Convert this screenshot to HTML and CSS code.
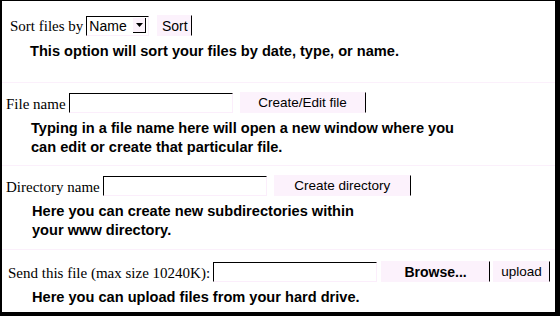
FILE: index.html
```html
<!DOCTYPE html>
<html lang="en">
<head>
    <meta charset="UTF-8">
    <title>File manager</title>
    <link rel="stylesheet" href="styles.css">
</head>
<body>
    <div class="frame">
        <form class="section sort-section">
            <div class="controls">
                <label class="label">Sort files by</label>
                <span class="select-box">
                    <select class="select">
                        <option>Name</option>
                        <option>Date</option>
                        <option>Type</option>
                    </select>
                    <span class="select-arrow"><svg width="7" height="4" viewBox="0 0 7 4"><path d="M0 0h7L3.5 4z" fill="#000"/></svg></span>
                </span>
                <button type="button" class="btn btn-sort">Sort</button>
            </div>
            <p class="desc">This option will sort your files by date, type, or name.</p>
        </form>

        <form class="section file-section">
            <div class="controls">
                <label class="label">File name</label>
                <input type="text" class="field">
                <button type="button" class="btn btn-edit">Create/Edit file</button>
            </div>
            <p class="desc">Typing in a file name here will open a new window where you<br>can edit or create that particular file.</p>
        </form>

        <form class="section dir-section">
            <div class="controls">
                <label class="label">Directory name</label>
                <input type="text" class="field">
                <button type="button" class="btn btn-dir">Create directory</button>
            </div>
            <p class="desc">Here you can create new subdirectories within<br>your www directory.</p>
        </form>

        <form class="section upload-section">
            <div class="controls">
                <label class="label">Send this file (max size 10240K):</label>
                <input type="text" class="field">
                <button type="button" class="btn btn-browse">Browse...</button>
                <button type="button" class="btn btn-upload">upload</button>
            </div>
            <p class="desc">Here you can upload files from your hard drive.</p>
        </form>
    </div>
</body>
</html>
```

FILE: styles.css
```css
html, body {
    margin: 0;
    padding: 0;
    background: #fff;
}
.frame {
    width: 560px;
    height: 316px;
    box-sizing: border-box;
    border-style: solid;
    border-color: #000;
    border-width: 1px 5px 4px 2px;
    background: #fff;
    overflow: hidden;
}
.section {
    margin: 0;
    border-bottom: 1px solid #fbf0fb;
}
.sort-section {
    height: 82px;
    padding: 14px 0 0 8px;
    box-sizing: border-box;
}
.file-section {
    height: 83px;
    padding: 9px 0 0 4px;
    box-sizing: border-box;
}
.dir-section {
    height: 84px;
    padding: 9px 0 0 4px;
    box-sizing: border-box;
}
.upload-section {
    border-bottom: none;
    padding: 11px 0 0 6px;
}
.controls {
    display: flex;
    align-items: center;
    height: 21px;
}
.label {
    align-self: flex-end;
    font-family: "Liberation Serif", "Times New Roman", serif;
    font-size: 15px;
    line-height: 17px;
    color: #000;
    margin-right: 3px;
}
.sort-section .label {
    line-height: 19px;
}
.desc {
    margin: 6px 0 0 20px;
    font-family: "Liberation Sans", Arial, sans-serif;
    font-weight: bold;
    font-size: 14.6px;
    line-height: 19px;
    color: #000;
}
.file-section .desc {
    margin-left: 25px;
}
.dir-section .desc {
    margin-left: 26px;
}
.upload-section .desc {
    margin-left: 24px;
}
.select-box {
    display: inline-flex;
    align-items: center;
    width: 63px;
    height: 20px;
    box-sizing: border-box;
    border-style: solid;
    border-width: 1px;
    border-color: #000 #fbeefb #fbeefb #000;
    background: #fff;
}
.select {
    appearance: none;
    -webkit-appearance: none;
    border: none;
    outline: none;
    background: transparent;
    font-family: "Liberation Sans", Arial, sans-serif;
    font-size: 14px;
    padding: 0 0 0 2px;
    width: 46px;
    height: 18px;
    color: #000;
}
.select-arrow {
    display: inline-flex;
    align-items: center;
    justify-content: center;
    width: 13px;
    height: 15px;
    background: #fcf2fc;
    border-right: 1px solid #000;
    border-bottom: 1px solid #000;
    box-sizing: border-box;
}
.field {
    width: 164px;
    height: 20px;
    box-sizing: border-box;
    padding: 0 2px;
    margin: 0;
    border-style: solid;
    border-width: 1px;
    border-color: #000 #fbeefb #fbeefb #000;
    background: #fff;
    font-size: 13px;
}
.btn {
    height: 21px;
    box-sizing: border-box;
    margin: 0;
    padding: 0;
    border-style: solid;
    border-width: 1px;
    border-color: #fcf2fc #000 #fcf2fc #fcf2fc;
    background: #fcf2fc;
    font-family: "Liberation Sans", Arial, sans-serif;
    font-size: 13.5px;
    color: #000;
}
.btn-sort {
    width: 35px;
    margin-left: 8px;
    font-size: 14px;
}
.btn-edit {
    width: 126px;
    margin-left: 7px;
}
.btn-dir {
    width: 137px;
    margin-left: 7px;
}
.btn-browse {
    width: 109px;
    margin-left: 4px;
    font-weight: bold;
    font-size: 14px;
}
.btn-upload {
    width: 57px;
    margin-left: 3px;
}
```
